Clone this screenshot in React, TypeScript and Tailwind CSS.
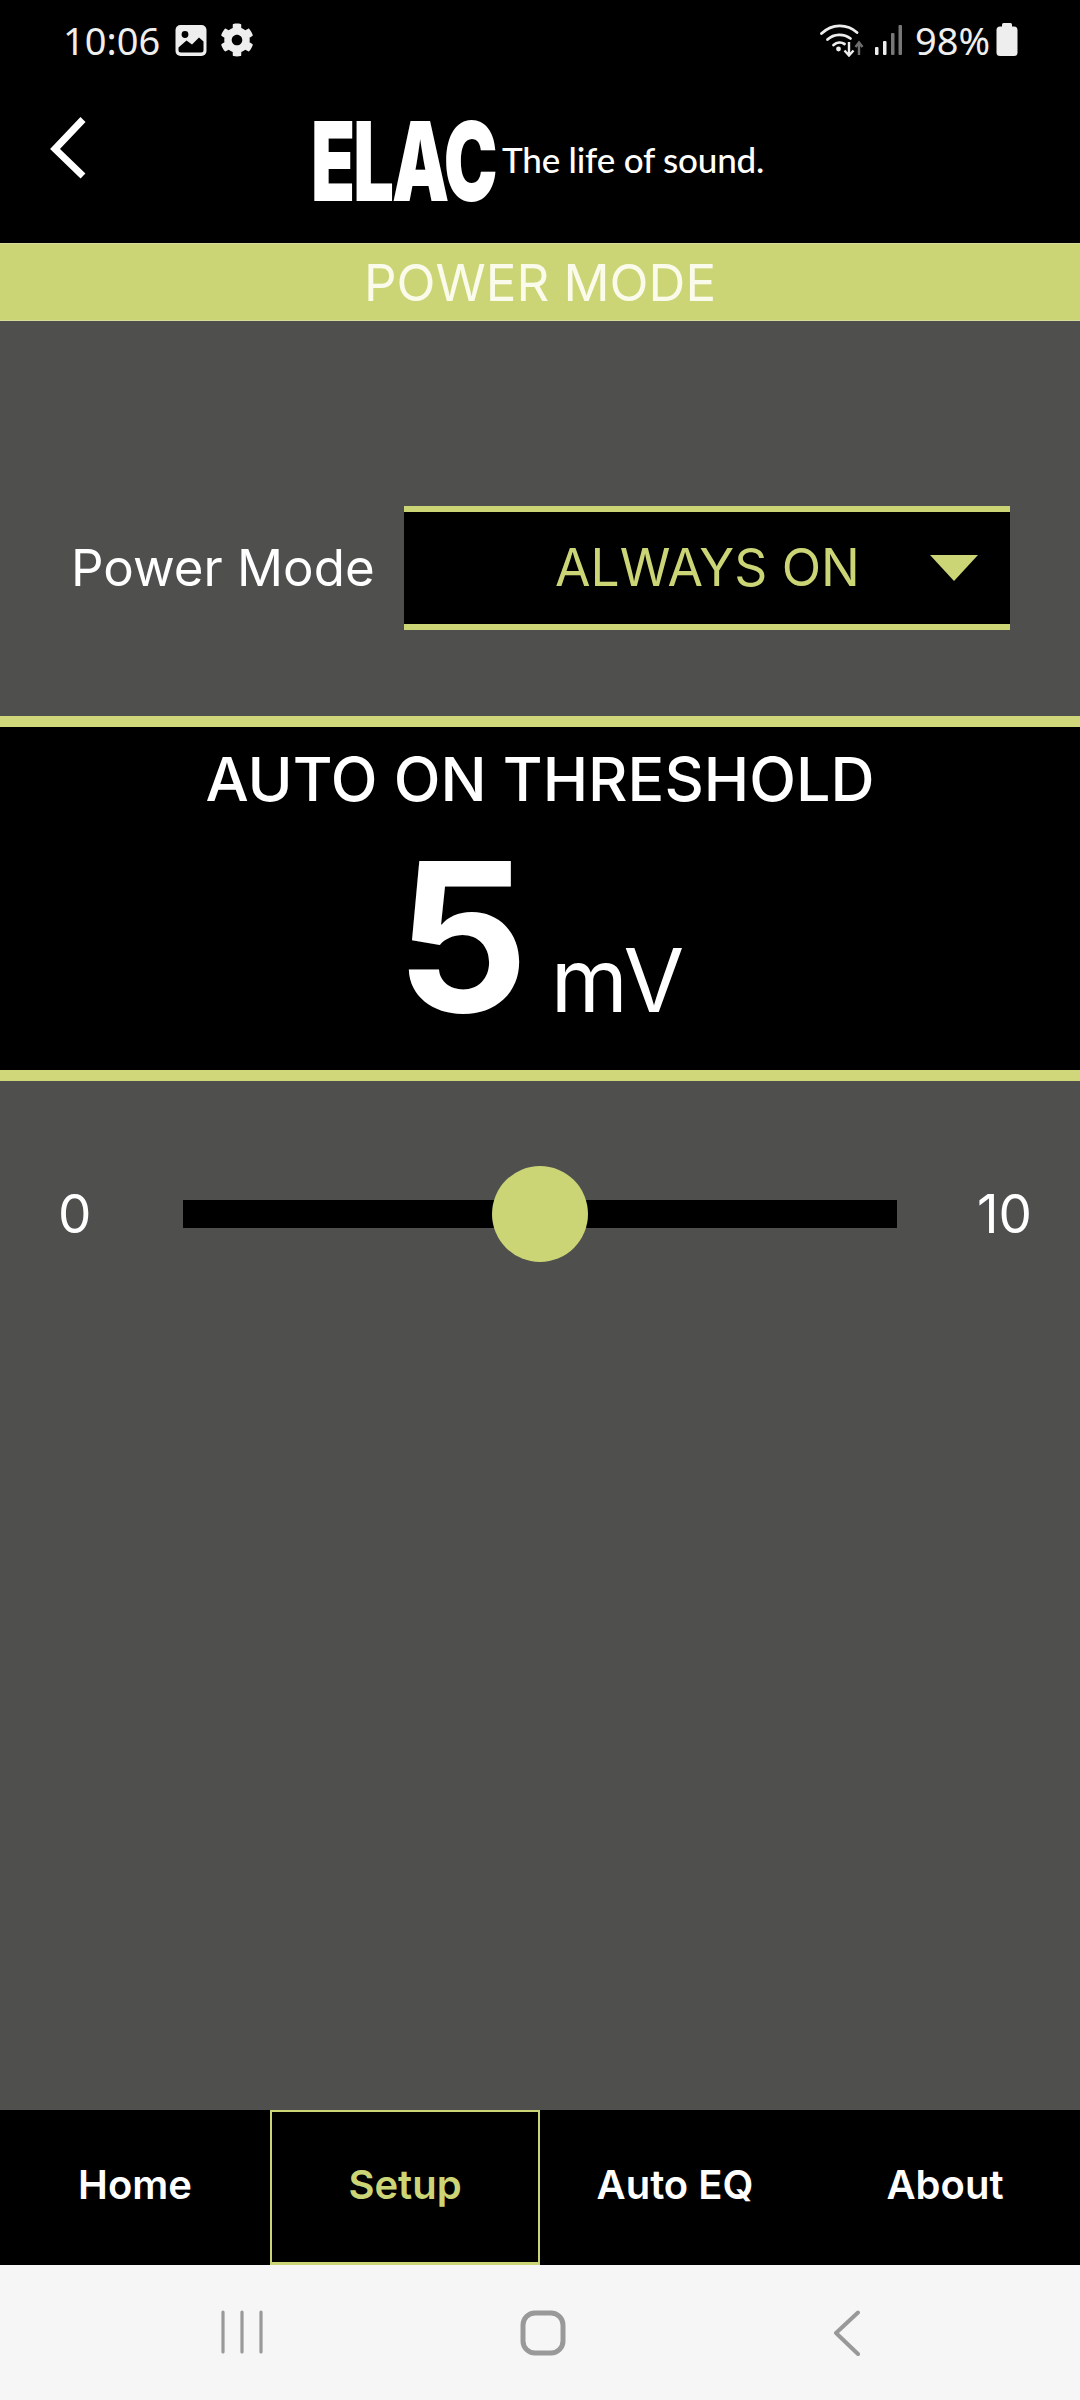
import { FaCog } from 'react-icons/fa';

function ImageIcon() {
  return (
    <svg width="32" height="32" viewBox="0 0 32 32" className="text-[#eeeeee]">
      <rect x="0.5" y="1" width="31" height="31" rx="5" fill="currentColor" />
      <circle cx="10" cy="10.5" r="3.4" fill="#000" />
      <path d="M3.5 23.5 L11.5 16.5 L17 20.5 L24 13.5 L28.5 17.5 V26 a2.5 2.5 0 0 1 -2.5 2.5 H6 a2.5 2.5 0 0 1 -2.5 -2.5 Z" fill="#000" />
    </svg>
  );
}

function WifiIcon() {
  return (
    <svg width="44" height="34" viewBox="0 0 44 34" fill="none">
      <path d="M1.5 10.5 C12 0.5 27 0.5 37 9.5" stroke="#eeeeee" strokeWidth="2.8" strokeLinecap="round" />
      <path d="M7.5 16.5 C14 10.5 24 10.5 30.5 15.5" stroke="#eeeeee" strokeWidth="2.8" strokeLinecap="round" />
      <path d="M13.5 22 C17 19 21.5 19 24.5 21" stroke="#eeeeee" strokeWidth="2.8" strokeLinecap="round" />
      <circle cx="18.5" cy="26" r="2.4" fill="#eeeeee" />
      <path d="M29 19 V32 M24.5 27.5 L29 32.5 L33.5 27.5" stroke="#eeeeee" strokeWidth="2.4" />
      <path d="M39 32 V20 M35.5 24 L39 19.5 L42.5 24" stroke="#6e6e6e" strokeWidth="2.4" />
    </svg>
  );
}

function SignalIcon() {
  return (
    <svg width="28" height="32" viewBox="0 0 28 32">
      <rect x="1" y="23" width="3.5" height="8" rx="1" fill="#eeeeee" />
      <rect x="9" y="17" width="3.5" height="14" rx="1" fill="#eeeeee" />
      <rect x="17" y="9" width="3.5" height="22" rx="1" fill="#777777" />
      <rect x="24.5" y="1" width="3.5" height="30" rx="1" fill="#777777" />
    </svg>
  );
}

function BatteryIcon() {
  return (
    <svg width="22" height="33" viewBox="0 0 22 33">
      <rect x="6" y="0" width="10" height="5" rx="1.5" fill="#eeeeee" />
      <rect x="0.5" y="3.5" width="21" height="29.5" rx="3.5" fill="#eeeeee" />
    </svg>
  );
}

function StatusBar() {
  return (
    <div className="flex h-[79px] items-center pl-[63px] pr-[62px] font-['Noto_Sans',sans-serif] text-[38px] text-[#eeeeee]">
      <span className="w-[92px] leading-none">10:06</span>
      <span className="ml-[20px] flex"><ImageIcon /></span>
      <FaCog className="ml-[13px] text-[34px] text-[#eeeeee]" />
      <div className="ml-auto flex items-center">
        <WifiIcon />
        <span className="ml-[10px] flex"><SignalIcon /></span>
        <span className="ml-[13px] leading-none">98%</span>
        <span className="ml-[6px] flex"><BatteryIcon /></span>
      </div>
    </div>
  );
}

function Header() {
  return (
    <div className="flex h-[164px] items-start">
      <svg width="40" height="64" viewBox="0 0 40 64" fill="none" className="mt-[37px] ml-[48px]">
        <path d="M35 3.5 L7 33 L35 60" stroke="#fff" strokeWidth="7" />
      </svg>
      <div className="mt-[40px] ml-[223px] flex items-start">
        <div className="h-[85px] w-[189px] overflow-visible">
          <span className="block origin-top-left scale-x-[0.655] font-['Inter',sans-serif] text-[110px] leading-[85px] font-black tracking-[-3px] text-white">
            ELAC
          </span>
        </div>
        <span className="mt-[20px] ml-[2px] font-['Lato',sans-serif] text-[35px] leading-[40px] font-medium tracking-[-0.2px] text-white">
          The life of sound.
        </span>
      </div>
    </div>
  );
}

function PowerMode() {
  return (
    <div className="flex h-[395px] items-start bg-[#4f4f4d] pt-[185px]">
      <span className="ml-[71px] w-[333px] font-['Inter',sans-serif] text-[51px] leading-[123px] text-white">Power Mode</span>
      <div className="flex h-[124px] w-[606px] items-center border-y-[6px] border-[#cbd576] bg-black">
        <span className="ml-[151px] font-['Inter',sans-serif] text-[51.5px] text-[#cbd576]">ALWAYS ON</span>
        <svg width="48" height="26" viewBox="0 0 48 26" className="absolute ml-[526px]">
          <path d="M0 0 H48 L24 26 Z" fill="#cbd576" />
        </svg>
      </div>
    </div>
  );
}

function Threshold() {
  return (
    <div className="flex h-[365px] flex-col items-center border-y-[11px] border-[#d0d67a] bg-black font-['Inter',sans-serif] text-white">
      <span className="mt-[15px] text-[61px] leading-[75px] font-medium">AUTO ON THRESHOLD</span>
      <div className="mt-[9px] flex items-baseline">
        <span className="text-[208px] leading-[220px] font-bold">5</span>
        <span className="ml-[22px] text-[88px] leading-none">mV</span>
      </div>
    </div>
  );
}

function Slider() {
  return (
    <div className="flex flex-1 items-start bg-[#4f4f4d] pt-[85px] font-['Inter',sans-serif] text-[53px] text-white">
      <div className="flex h-[96px] w-full items-center">
        <span className="w-[183px] pl-[58px] pt-[2px]">0</span>
        <div className="relative h-[28px] w-[714px] bg-black">
          <div className="absolute top-[-34px] left-[309px] h-[96px] w-[96px] rounded-full bg-[#cbd576]" />
        </div>
        <span className="w-[183px] pl-[80px] pt-[2px]">10</span>
      </div>
    </div>
  );
}

const tabs = ['Home', 'Setup', 'Auto EQ', 'About'];

function TabBar() {
  return (
    <div className="grid h-[155px] grid-cols-4 bg-black font-['Inter',sans-serif] text-[40px] font-semibold text-white">
      {tabs.map((tab) => (
        <div
          key={tab}
          className={
            tab === 'Setup'
              ? 'flex items-center justify-center border-2 border-b-[3px] border-[#cbd576] pb-[5px] text-[#cbd576]'
              : 'flex items-center justify-center pb-[5px]'
          }
        >
          {tab}
        </div>
      ))}
    </div>
  );
}

function NavBar() {
  return (
    <div className="flex h-[135px] items-start bg-[#f6f6f6] pt-[45px]">
      <svg width="42" height="44" viewBox="0 0 42 44" className="ml-[221px]" fill="none" stroke="#999" strokeWidth="3.2" strokeLinecap="round">
        <path d="M2 2 V42 M21 2 V42 M40 2 V42" />
      </svg>
      <svg width="46" height="46" viewBox="0 0 46 46" className="ml-[257px]" fill="none" stroke="#999" strokeWidth="5">
        <rect x="3" y="3" width="40" height="40" rx="12" />
      </svg>
      <svg width="28" height="46" viewBox="0 0 28 46" className="ml-[267px]" fill="none" stroke="#999" strokeWidth="4" strokeLinecap="round" strokeLinejoin="round">
        <path d="M25 2.5 L3 23 L25 44" />
      </svg>
    </div>
  );
}

export default function App() {
  return (
    <div className="flex h-[2400px] w-[1080px] flex-col overflow-hidden bg-black">
      <StatusBar />
      <Header />
      <div className="flex h-[78px] items-center justify-center border-y border-[#d7dc9b] bg-[#cbd576] pt-[2px] font-['Inter',sans-serif] text-[51px] text-[#fbfbec]">
        POWER MODE
      </div>
      <PowerMode />
      <Threshold />
      <Slider />
      <TabBar />
      <NavBar />
    </div>
  );
}
